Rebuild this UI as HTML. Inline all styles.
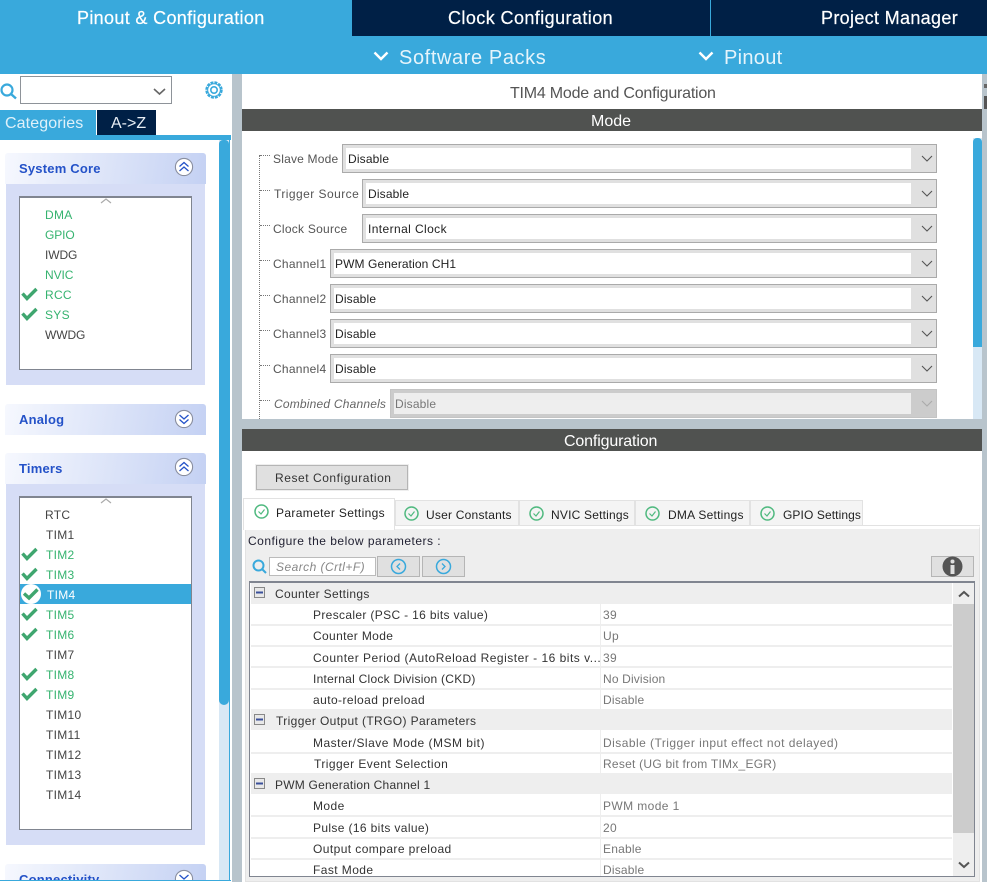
<!DOCTYPE html>
<html><head><meta charset="utf-8"><style>
html,body{margin:0;padding:0;background:#fff}
#p{position:relative;width:987px;height:882px;overflow:hidden;background:#fff;font-family:"Liberation Sans",sans-serif}
#p div{position:absolute;box-sizing:border-box}
#p svg{position:absolute;overflow:visible}
.t,.l,.g,.n,.v,.h,.i{position:absolute;white-space:nowrap;line-height:16px}
.l{font-size:12px;letter-spacing:.25px;color:#555;left:273px;margin-top:1px}
.s{font-size:12px;letter-spacing:.17px;color:#222;position:absolute;white-space:nowrap;line-height:16px;margin-top:1px}
.i{font-size:12px;letter-spacing:.3px;left:45px;color:#444;margin-top:1px}
.i.k{color:#35b36f}
.h{font-size:13px;font-weight:bold;color:#2452c8;left:19px;letter-spacing:.2px}
.n{font-size:12px;letter-spacing:.42px;color:#333;left:313px;margin-top:1px}
.v{font-size:12px;letter-spacing:.35px;color:#777;left:603px;margin-top:1px}
.g{font-size:12px;letter-spacing:.33px;color:#333;left:275px;margin-top:1px}
.tb{font-size:12px;letter-spacing:.25px;color:#222;position:absolute;white-space:nowrap;line-height:16px}
.hd{left:5px;width:201px;height:31px;background:linear-gradient(100deg,#f6f8fe,#c4d1f3);border-radius:3px 3px 0 0}
.cb{border:1px solid #aaa;background:#e0e0e0;height:29px}
.cw{background:#fff;top:3px;height:21px}
.rw{left:251px;width:701px;height:2px;background:#eee}
.gp{left:251px;width:701px;background:#eee;height:21px}
.tab{background:#f4f4f4;border:1px solid #e2e2e2;border-bottom:0;top:500px;height:25px}
</style></head><body><div id="p">

<div style="left:0;top:0;width:987px;height:74px;background:#39a9dc"></div>
<div style="left:352px;top:0;width:358px;height:36px;background:#002046"></div>
<div style="left:711px;top:0;width:276px;height:36px;background:#002046"></div>
<span class="t" style="left:77px;top:10px;font-size:18px;color:#fff;letter-spacing:.34px;-webkit-text-stroke:.2px #fff">Pinout &amp; Configuration</span>
<span class="t" style="left:448px;top:10px;font-size:18px;color:#fff;letter-spacing:.42px;-webkit-text-stroke:.2px #fff">Clock Configuration</span>
<span class="t" style="left:821px;top:10px;font-size:18px;color:#fff;letter-spacing:.33px;-webkit-text-stroke:.2px #fff">Project Manager</span>
<svg style="left:373px;top:51px" width="16" height="10"><path d="M1.5 1.5L8 8L14.5 1.5" fill="none" stroke="#fff" stroke-width="2.4"/></svg>
<span class="t" style="left:399px;top:49px;font-size:20px;line-height:18px;color:#e6f4fb;letter-spacing:.6px">Software Packs</span>
<svg style="left:698px;top:51px" width="16" height="10"><path d="M1.5 1.5L8 8L14.5 1.5" fill="none" stroke="#fff" stroke-width="2.4"/></svg>
<span class="t" style="left:724px;top:49px;font-size:20px;line-height:18px;color:#e6f4fb;letter-spacing:.3px">Pinout</span>

<div style="left:232px;top:74px;width:10px;height:808px;background:#b8c4cc"></div>
<div style="left:982px;top:74px;width:5px;height:808px;background:#b8c4cc"></div>
<div style="left:984px;top:84px;width:3px;height:4px;background:#666"></div>
<div style="left:984px;top:96px;width:3px;height:13px;background:#555"></div>
<div style="left:242px;top:419px;width:740px;height:10px;background:#b8c4cc"></div>

<svg style="left:0;top:83px" width="18" height="18"><circle cx="7" cy="7" r="5.5" fill="none" stroke="#39a9dc" stroke-width="2.2"/><path d="M11 11L16 15.5" stroke="#39a9dc" stroke-width="2.4"/></svg>
<div style="left:20px;top:76px;width:152px;height:28px;border:1px solid #8e9399;background:#fff"></div>
<svg style="left:153px;top:88px" width="13" height="8"><path d="M1 1L6.5 6L12 1" fill="none" stroke="#666" stroke-width="1.6"/></svg>
<svg style="left:204px;top:80px" width="20" height="20"><circle cx="10" cy="10" r="7.6" fill="none" stroke="#39a9dc" stroke-width="2.2" stroke-dasharray="3 1"/><circle cx="10" cy="10" r="6.3" fill="none" stroke="#39a9dc" stroke-width="1"/><circle cx="10" cy="10" r="3.2" fill="none" stroke="#39a9dc" stroke-width="1.6"/></svg>

<div style="left:0;top:110px;width:96px;height:25px;background:#39a9dc"></div>
<span class="t" style="left:5px;top:115px;font-size:16px;line-height:18px;color:#dff1fa;letter-spacing:.1px">Categories</span>
<div style="left:97px;top:110px;width:59px;height:25px;background:#002046"></div>
<span class="t" style="left:111px;top:115px;font-size:16px;line-height:18px;color:#e8eef5">A-&gt;Z</span>
<div style="left:0;top:135px;width:231px;height:5px;background:#39a9dc"></div>
<div style="left:229px;top:135px;width:1px;height:746px;background:#39a9dc"></div>
<div style="left:219px;top:140px;width:10px;height:740px;background:#d8e8f5"></div>
<div style="left:219px;top:140px;width:10px;height:565px;background:#39a9dc;border-radius:4px 4px 5px 5px"></div>

<div class="hd" style="top:153px"></div>
<span class="h" style="top:161px">System Core</span>
<svg style="left:175px;top:157px" width="18" height="20"><circle cx="9" cy="10" r="8.6" fill="#fff" stroke="#8a8fa0" stroke-width="1.1"/><path d="M4.5 9.5L9 5.5L13.5 9.5M4.5 14L9 10L13.5 14" fill="none" stroke="#2452c8" stroke-width="1.3"/></svg>
<div style="left:6px;top:184px;width:199px;height:201px;background:#d6ddf6"></div>
<div style="left:19px;top:196px;width:173px;height:174px;background:#fff;border:1px solid #808590;border-top-width:2px"></div>
<svg style="left:100px;top:197px" width="12" height="7"><path d="M1 6L6 2L11 6" fill="none" stroke="#aaa" stroke-width="1.2"/></svg>
<span class="i k" style="top:206px">DMA</span>
<span class="i k" style="top:226px;letter-spacing:-.1px">GPIO</span>
<span class="i" style="top:246px;letter-spacing:-.1px">IWDG</span>
<span class="i k" style="top:266px;letter-spacing:-.1px">NVIC</span>
<span class="i k" style="top:286px">RCC</span>
<span class="i k" style="top:306px">SYS</span>
<span class="i" style="top:326px;letter-spacing:-.1px">WWDG</span>
<svg style="left:21px;top:287px" width="17" height="14"><path d="M1.5 6.5L6 11.5L15.5 2" fill="none" stroke="#3fa66f" stroke-width="3.4"/></svg>
<svg style="left:21px;top:307px" width="17" height="14"><path d="M1.5 6.5L6 11.5L15.5 2" fill="none" stroke="#3fa66f" stroke-width="3.4"/></svg>

<div class="hd" style="top:404px"></div>
<span class="h" style="top:412px">Analog</span>
<svg style="left:175px;top:409px" width="18" height="20"><circle cx="9" cy="10" r="8.6" fill="#fff" stroke="#8a8fa0" stroke-width="1.1"/><path d="M4.5 6L9 10L13.5 6M4.5 10.500L9 14.500L13.500 10.500" fill="none" stroke="#2452c8" stroke-width="1.3"/></svg>

<div class="hd" style="top:453px"></div>
<span class="h" style="top:461px">Timers</span>
<svg style="left:175px;top:457px" width="18" height="20"><circle cx="9" cy="10" r="8.6" fill="#fff" stroke="#8a8fa0" stroke-width="1.1"/><path d="M4.5 9.500L9 5.500L13.500 9.500M4.500 14L9 10L13.500 14" fill="none" stroke="#2452c8" stroke-width="1.3"/></svg>
<div style="left:6px;top:484px;width:199px;height:361px;background:#d6ddf6"></div>
<div style="left:19px;top:496px;width:173px;height:334px;background:#fff;border:1px solid #808590;border-top-width:2px"></div>
<svg style="left:100px;top:497px" width="12" height="7"><path d="M1 6L6 2L11 6" fill="none" stroke="#aaa" stroke-width="1.2"/></svg>
<div style="left:20px;top:584px;width:171px;height:20px;background:#39a9dc"></div>
<span class="i" style="top:506px">RTC</span>
<span class="i" style="top:526px;left:46px">TIM1</span>
<span class="i k" style="top:546px;left:46px">TIM2</span>
<span class="i k" style="top:566px;left:46px">TIM3</span>
<span class="i" style="top:586px;left:47px;color:#fff">TIM4</span>
<span class="i k" style="top:606px;left:46px">TIM5</span>
<span class="i k" style="top:626px;left:46px">TIM6</span>
<span class="i" style="top:646px;left:46px">TIM7</span>
<span class="i k" style="top:666px;left:46px">TIM8</span>
<span class="i k" style="top:686px;left:46px">TIM9</span>
<span class="i" style="top:706px;left:46px">TIM10</span>
<span class="i" style="top:726px;left:46px">TIM11</span>
<span class="i" style="top:746px;left:46px">TIM12</span>
<span class="i" style="top:766px;left:46px">TIM13</span>
<span class="i" style="top:786px;left:46px">TIM14</span>
<svg style="left:21px;top:547px" width="17" height="14"><path d="M1.500 6.500L6 11.500L15.500 2" fill="none" stroke="#3fa66f" stroke-width="3.4"/></svg>
<svg style="left:21px;top:567px" width="17" height="14"><path d="M1.500 6.500L6 11.500L15.500 2" fill="none" stroke="#3fa66f" stroke-width="3.4"/></svg>
<svg style="left:21px;top:584px" width="20" height="20"><circle cx="10" cy="10" r="10" fill="#fff"/><path d="M3 9.500L8 14L16.500 5.500" fill="none" stroke="#3fa66f" stroke-width="3.4"/></svg>
<svg style="left:21px;top:607px" width="17" height="14"><path d="M1.500 6.500L6 11.500L15.500 2" fill="none" stroke="#3fa66f" stroke-width="3.4"/></svg>
<svg style="left:21px;top:627px" width="17" height="14"><path d="M1.500 6.500L6 11.500L15.500 2" fill="none" stroke="#3fa66f" stroke-width="3.4"/></svg>
<svg style="left:21px;top:667px" width="17" height="14"><path d="M1.500 6.500L6 11.500L15.500 2" fill="none" stroke="#3fa66f" stroke-width="3.4"/></svg>
<svg style="left:21px;top:687px" width="17" height="14"><path d="M1.500 6.500L6 11.500L15.500 2" fill="none" stroke="#3fa66f" stroke-width="3.4"/></svg>

<div class="hd" style="top:864px"></div>
<span class="h" style="top:872px">Connectivity</span>
<svg style="left:175px;top:869px" width="18" height="20"><circle cx="9" cy="10" r="8.600" fill="#fff" stroke="#8a8fa0" stroke-width="1.1"/><path d="M4.500 6L9 10L13.500 6" fill="none" stroke="#2452c8" stroke-width="1.3"/></svg>
<div style="left:0;top:880px;width:231px;height:2px;background:#39a9dc"></div>
<div style="left:0;top:881px;width:231px;height:1px;background:#fff"></div>
<div style="left:219px;top:864px;width:10px;height:16px;background:#d8e8f5"></div>

<span class="t" style="left:510px;top:86px;font-size:16px;color:#555;letter-spacing:-.22px">TIM4 Mode and Configuration</span>
<div style="left:242px;top:109px;width:740px;height:22px;background:#505250"></div>
<span class="t" style="left:591px;top:115px;font-size:16px;line-height:14px;color:#fff">Mode</span>

<div style="left:973px;top:138px;width:9px;height:281px;background:#d8e8f5"></div>
<div style="left:973px;top:138px;width:9px;height:209px;background:#39a9dc;border-radius:4px 4px 0 0"></div>

<div style="left:259px;top:155px;width:0;height:264px;border-left:1px dotted #777"></div>
<div style="left:260px;top:155px;width:10px;height:0;border-top:1px dotted #777"></div>
<div style="left:260px;top:190px;width:10px;height:0;border-top:1px dotted #777"></div>
<div style="left:260px;top:225px;width:10px;height:0;border-top:1px dotted #777"></div>
<div style="left:260px;top:260px;width:10px;height:0;border-top:1px dotted #777"></div>
<div style="left:260px;top:295px;width:10px;height:0;border-top:1px dotted #777"></div>
<div style="left:260px;top:330px;width:10px;height:0;border-top:1px dotted #777"></div>
<div style="left:260px;top:365px;width:10px;height:0;border-top:1px dotted #777"></div>
<div style="left:260px;top:400px;width:10px;height:0;border-top:1px dotted #777"></div>

<span class="l" style="top:150px;letter-spacing:.2px">Slave Mode</span>
<div class="cb" style="left:342px;top:144px;width:595px"><div class="cw" style="left:3px;width:565px"></div></div>
<span class="s" style="left:348px;top:150px">Disable</span>
<span class="l" style="top:185px;left:274px;letter-spacing:.45px">Trigger Source</span>
<div class="cb" style="left:362px;top:179px;width:575px"><div class="cw" style="left:3px;width:545px"></div></div>
<span class="s" style="left:368px;top:185px">Disable</span>
<span class="l" style="top:220px">Clock Source</span>
<div class="cb" style="left:362px;top:214px;width:575px"><div class="cw" style="left:3px;width:545px"></div></div>
<span class="s" style="left:368px;top:220px;letter-spacing:.4px">Internal Clock</span>
<span class="l" style="top:255px">Channel1</span>
<div class="cb" style="left:330px;top:249px;width:607px"><div class="cw" style="left:3px;width:577px"></div></div>
<span class="s" style="left:335px;top:255px;letter-spacing:.1px">PWM Generation CH1</span>
<span class="l" style="top:290px">Channel2</span>
<div class="cb" style="left:330px;top:284px;width:607px"><div class="cw" style="left:3px;width:577px"></div></div>
<span class="s" style="left:335px;top:290px">Disable</span>
<span class="l" style="top:325px">Channel3</span>
<div class="cb" style="left:330px;top:319px;width:607px"><div class="cw" style="left:3px;width:577px"></div></div>
<span class="s" style="left:335px;top:325px">Disable</span>
<span class="l" style="top:360px">Channel4</span>
<div class="cb" style="left:330px;top:354px;width:607px"><div class="cw" style="left:3px;width:577px"></div></div>
<span class="s" style="left:335px;top:360px">Disable</span>
<span class="l" style="top:395px;left:274px;font-style:italic;color:#666;letter-spacing:.2px">Combined Channels</span>
<div class="cb" style="left:390px;top:389px;width:547px;background:#ccc;border-color:#c4c4c4"><div class="cw" style="left:3px;width:517px;background:#eee"></div></div>
<span class="s" style="left:395px;top:395px;color:#777">Disable</span>
<svg style="left:921px;top:155px" width="12" height="7"><path d="M1 1L6 6L11 1" fill="none" stroke="#555" stroke-width="1.1"/></svg>
<svg style="left:921px;top:190px" width="12" height="7"><path d="M1 1L6 6L11 1" fill="none" stroke="#555" stroke-width="1.1"/></svg>
<svg style="left:921px;top:225px" width="12" height="7"><path d="M1 1L6 6L11 1" fill="none" stroke="#555" stroke-width="1.1"/></svg>
<svg style="left:921px;top:260px" width="12" height="7"><path d="M1 1L6 6L11 1" fill="none" stroke="#555" stroke-width="1.1"/></svg>
<svg style="left:921px;top:295px" width="12" height="7"><path d="M1 1L6 6L11 1" fill="none" stroke="#555" stroke-width="1.1"/></svg>
<svg style="left:921px;top:330px" width="12" height="7"><path d="M1 1L6 6L11 1" fill="none" stroke="#555" stroke-width="1.1"/></svg>
<svg style="left:921px;top:365px" width="12" height="7"><path d="M1 1L6 6L11 1" fill="none" stroke="#555" stroke-width="1.1"/></svg>
<svg style="left:921px;top:400px" width="12" height="7"><path d="M1 1L6 6L11 1" fill="none" stroke="#aaa" stroke-width="1.1"/></svg>

<div style="left:242px;top:429px;width:740px;height:22px;background:#505250"></div>
<span class="t" style="left:564px;top:435px;font-size:16px;line-height:14px;color:#fff;letter-spacing:-.15px">Configuration</span>
<div style="left:256px;top:465px;width:152px;height:25px;background:#e0e0e0;border:1px solid #b5b5b5;outline:1px solid #eee"></div>
<span class="tb" style="left:275px;top:470px;letter-spacing:.55px;color:#333">Reset Configuration</span>

<div style="left:245px;top:525px;width:735px;height:357px;background:#eee;border:1px solid #e2e2e2;border-top:4px solid #fff"></div>
<div style="left:245px;top:525px;width:735px;height:1px;background:#e2e2e2"></div>
<div class="tab" style="left:395px;width:124px"></div>
<div class="tab" style="left:519px;width:116px"></div>
<div class="tab" style="left:635px;width:115px"></div>
<div class="tab" style="left:750px;width:113px"></div>
<div style="left:243px;top:498px;width:152px;height:32px;background:#fff;border:1px solid #e2e2e2;border-bottom:0"></div>
<svg style="left:254px;top:504px" width="15" height="15"><circle cx="7.500" cy="7.500" r="6.500" fill="none" stroke="#4fb97f" stroke-width="1.500"/><path d="M4.500 7.500L7 10L10.500 5.500" fill="none" stroke="#4fb97f" stroke-width="1.200"/></svg>
<svg style="left:404px;top:506px" width="15" height="15"><circle cx="7.500" cy="7.500" r="6.500" fill="none" stroke="#4fb97f" stroke-width="1.500"/><path d="M4.500 7.500L7 10L10.500 5.500" fill="none" stroke="#4fb97f" stroke-width="1.200"/></svg>
<svg style="left:529px;top:506px" width="15" height="15"><circle cx="7.500" cy="7.500" r="6.500" fill="none" stroke="#4fb97f" stroke-width="1.500"/><path d="M4.500 7.500L7 10L10.500 5.500" fill="none" stroke="#4fb97f" stroke-width="1.200"/></svg>
<svg style="left:645px;top:506px" width="15" height="15"><circle cx="7.500" cy="7.500" r="6.500" fill="none" stroke="#4fb97f" stroke-width="1.500"/><path d="M4.500 7.500L7 10L10.500 5.500" fill="none" stroke="#4fb97f" stroke-width="1.200"/></svg>
<svg style="left:760px;top:506px" width="15" height="15"><circle cx="7.500" cy="7.500" r="6.500" fill="none" stroke="#4fb97f" stroke-width="1.500"/><path d="M4.500 7.500L7 10L10.500 5.500" fill="none" stroke="#4fb97f" stroke-width="1.200"/></svg>
<span class="tb" style="left:276px;top:505px;letter-spacing:.35px">Parameter Settings</span>
<span class="tb" style="left:426px;top:507px;letter-spacing:.22px">User Constants</span>
<span class="tb" style="left:551px;top:507px;letter-spacing:.2px">NVIC Settings</span>
<span class="tb" style="left:668px;top:507px">DMA Settings</span>
<span class="tb" style="left:783px;top:507px;letter-spacing:.1px">GPIO Settings</span>

<span class="tb" style="left:248px;top:533px;color:#223;letter-spacing:.49px">Configure the below parameters :</span>
<svg style="left:252px;top:559px" width="16" height="16"><circle cx="6.500" cy="6.500" r="5" fill="none" stroke="#39a9dc" stroke-width="2"/><path d="M10 10L14 14" stroke="#39a9dc" stroke-width="2"/></svg>
<div style="left:269px;top:557px;width:107px;height:19px;background:#fff;border:1px solid #bbb"></div>
<span class="tb" style="left:276px;top:559px;font-style:italic;color:#888;letter-spacing:.45px">Search (Crtl+F)</span>
<div style="left:377px;top:556px;width:43px;height:21px;background:#e0e0e0;border:1px solid #b5b5b5"></div>
<div style="left:422px;top:556px;width:43px;height:21px;background:#e0e0e0;border:1px solid #b5b5b5"></div>
<svg style="left:390px;top:558px" width="18" height="17"><circle cx="8.500" cy="8.500" r="7" fill="none" stroke="#39a9dc" stroke-width="1.500"/><path d="M10 5.500L7 8.500L10 11.500" fill="none" stroke="#39a9dc" stroke-width="1.300"/></svg>
<svg style="left:435px;top:558px" width="18" height="17"><circle cx="8.500" cy="8.500" r="7" fill="none" stroke="#39a9dc" stroke-width="1.500"/><path d="M7 5.500L10 8.500L7 11.500" fill="none" stroke="#39a9dc" stroke-width="1.300"/></svg>
<div style="left:931px;top:556px;width:43px;height:21px;background:#e0e0e0;border:1px solid #b5b5b5"></div>
<svg style="left:942px;top:556px" width="21" height="21"><circle cx="10.500" cy="10.500" r="10" fill="#555"/><rect x="8.500" y="9" width="4" height="9" fill="#e0e0e0"/><circle cx="10.500" cy="5.500" r="2" fill="#e0e0e0"/></svg>

<div style="left:249px;top:581px;width:726px;height:296px;background:#fff;border:1px solid #808590;border-top-width:2px"></div>
<div style="left:953px;top:583px;width:21px;height:293px;background:#eee"></div>
<div style="left:953px;top:604px;width:21px;height:229px;background:#ccc"></div>
<svg style="left:958px;top:590px" width="12" height="8"><path d="M1 6.500L6 2L11 6.500" fill="none" stroke="#555" stroke-width="2"/></svg>
<svg style="left:958px;top:861px" width="12" height="8"><path d="M1 1.500L6 6L11 1.500" fill="none" stroke="#555" stroke-width="2"/></svg>
<div style="left:600px;top:583px;width:1px;height:293px;background:#eee"></div>

<div class="gp" style="top:583px"></div>
<div class="gp" style="top:709px"></div>
<div class="gp" style="top:773px"></div>
<div class="rw" style="top:624px"></div>
<div class="rw" style="top:645px"></div>
<div class="rw" style="top:666px"></div>
<div class="rw" style="top:688px"></div>
<div class="rw" style="top:752px"></div>
<div class="rw" style="top:815px"></div>
<div class="rw" style="top:837px"></div>
<div class="rw" style="top:858px"></div>

<svg style="left:254px;top:587px" width="11" height="11"><rect x=".5" y=".5" width="10" height="10" fill="#e8e8e8" stroke="#888"/><rect x="2" y="4.500" width="7" height="2" fill="#3a4f9a"/></svg>
<svg style="left:254px;top:714px" width="11" height="11"><rect x=".5" y=".5" width="10" height="10" fill="#e8e8e8" stroke="#888"/><rect x="2" y="4.500" width="7" height="2" fill="#3a4f9a"/></svg>
<svg style="left:254px;top:778px" width="11" height="11"><rect x=".5" y=".5" width="10" height="10" fill="#e8e8e8" stroke="#888"/><rect x="2" y="4.500" width="7" height="2" fill="#3a4f9a"/></svg>

<span class="g" style="top:585px">Counter Settings</span>
<span class="n" style="top:606px;letter-spacing:.34px">Prescaler (PSC - 16 bits value)</span><span class="v" style="top:606px">39</span>
<span class="n" style="top:627px;letter-spacing:.35px">Counter Mode</span><span class="v" style="top:627px">Up</span>
<span class="n" style="top:649px;letter-spacing:.5px">Counter Period (AutoReload Register - 16 bits v...</span><span class="v" style="top:649px">39</span>
<span class="n" style="top:670px;letter-spacing:.25px">Internal Clock Division (CKD)</span><span class="v" style="top:670px;letter-spacing:.15px">No Division</span>
<span class="n" style="top:691px">auto-reload preload</span><span class="v" style="top:691px;letter-spacing:.2px">Disable</span>
<span class="g" style="top:712px;left:276px;letter-spacing:.38px">Trigger Output (TRGO) Parameters</span>
<span class="n" style="top:734px;letter-spacing:.49px">Master/Slave Mode (MSM bit)</span><span class="v" style="top:734px;letter-spacing:.46px">Disable (Trigger input effect not delayed)</span>
<span class="n" style="top:755px;left:314px;letter-spacing:.43px">Trigger Event Selection</span><span class="v" style="top:755px;letter-spacing:.25px">Reset (UG bit from TIMx_EGR)</span>
<span class="g" style="top:776px;letter-spacing:.22px">PWM Generation Channel 1</span>
<span class="n" style="top:797px">Mode</span><span class="v" style="top:797px;letter-spacing:.4px">PWM mode 1</span>
<span class="n" style="top:819px;letter-spacing:.36px">Pulse (16 bits value)</span><span class="v" style="top:819px">20</span>
<span class="n" style="top:840px">Output compare preload</span><span class="v" style="top:840px;letter-spacing:.2px">Enable</span>
<span class="n" style="top:861px">Fast Mode</span><span class="v" style="top:861px;letter-spacing:.2px">Disable</span>

</div></body></html>
